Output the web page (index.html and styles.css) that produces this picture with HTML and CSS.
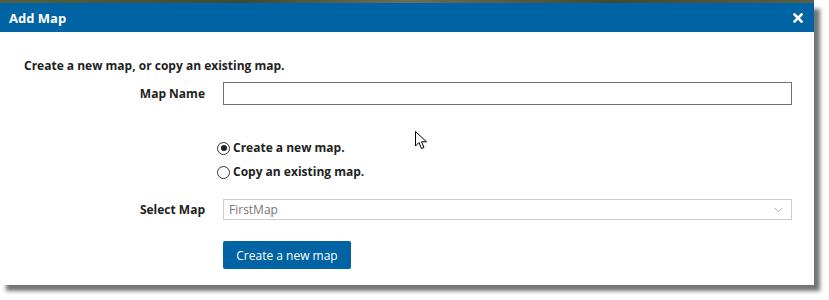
FILE: index.html
```html
<!DOCTYPE html>
<html>
<head>
<meta charset="utf-8">
<link rel="stylesheet" href="styles.css">
</head>
<body>
<div class="strip"></div>
<div class="dialog">
  <div class="header">
    <span class="title">Add Map</span>
    <svg class="close" width="10" height="10" viewBox="0 0 10 10"><path d="M1.5 1.5 L8.5 8.5 M8.5 1.5 L1.5 8.5" stroke="#fff" stroke-width="2.6" stroke-linecap="square"/></svg>
  </div>
  <div class="body">
    <div class="intro">Create a new map, or copy an existing map.</div>
    <div class="form">
      <label class="lbl">Map Name</label>
      <div class="input"></div>
      <div></div>
      <div class="radios">
        <div class="radio-row"><span class="radio checked"></span><span>Create a new map.</span></div>
        <div class="radio-row"><span class="radio"></span><span>Copy an existing map.</span></div>
      </div>
      <label class="lbl sel-lbl">Select Map</label>
      <div class="select"><span>FirstMap</span>
        <svg width="9" height="6" viewBox="0 0 9 6"><path d="M0.5 0.8 L4.5 4.8 L8.5 0.8" fill="none" stroke="#aaa" stroke-width="1"/></svg>
      </div>
      <div></div>
      <div><button class="btn">Create a new map</button></div>
    </div>
  </div>
  <svg class="cursor" width="14" height="20" viewBox="0 0 14 20"><path d="M0.5 0.5 L0.5 15 L4 11.5 L6.5 17.5 L9 16.5 L6.5 10.8 L11.5 10.8 Z" fill="#fff" stroke="#000" stroke-width="1"/></svg>
</div>
</body>
</html>
```
FILE: styles.css
```css
html, body { margin: 0; padding: 0; background: #fff; }
body { font-family: "Open Sans", "Liberation Sans", sans-serif; width: 829px; height: 300px; overflow: hidden; }
.strip { height: 3px; background: linear-gradient(90deg, #55603f, #3d4a36 30%, #6a6f55 50%, #404a33 75%, #5a5f45); width: 814px; }
.dialog { position: relative; width: 814px; height: 282px; background: #fff; box-shadow: 6px 6px 4px rgba(0,0,0,0.55); }
.header { height: 29px; background: #0063a3; display: flex; align-items: center; justify-content: space-between; padding: 0 11px 0 9px; }
.title { color: #fff; font-weight: 700; font-size: 13px; }
.close { display: block; margin-top: 0; }
.body { padding: 25px 0 0 24px; color: #222; }
.intro { font-weight: 700; font-size: 12px; line-height: 17px; }
.form { display: grid; grid-template-columns: 181px 569px; column-gap: 18px; margin-top: 8px; align-items: center; }
.lbl { font-weight: 700; font-size: 12px; text-align: right; }
.input { height: 21px; border: 1px solid #707070; }
.radios { margin-left: -6px; margin-top: 34px; display: flex; flex-direction: column; gap: 6px; }
.radio-row { display: flex; align-items: center; gap: 3px; font-weight: 700; font-size: 12px; line-height: 18px; }
.radio { width: 11px; height: 11px; border: 1px solid #333; border-radius: 50%; box-sizing: content-box; position: relative; }
.radio.checked::after { content: ""; position: absolute; left: 2.5px; top: 2.5px; width: 6px; height: 6px; border-radius: 50%; background: #222; }
.sel-lbl { margin-top: 18px; }
.select { margin-top: 18px; height: 19px; border: 1px solid #ccc; display: flex; align-items: center; justify-content: space-between; padding: 0 8px 0 5px; font-size: 12px; color: #777; }
.btn { margin-top: 21px; width: 128px; height: 28px; background: #0063a3; color: #fff; border: none; border-radius: 2px; font-family: "Open Sans", "Liberation Sans", sans-serif; font-size: 12px; padding: 0; }
.cursor { position: absolute; left: 415px; top: 128px; }
```
